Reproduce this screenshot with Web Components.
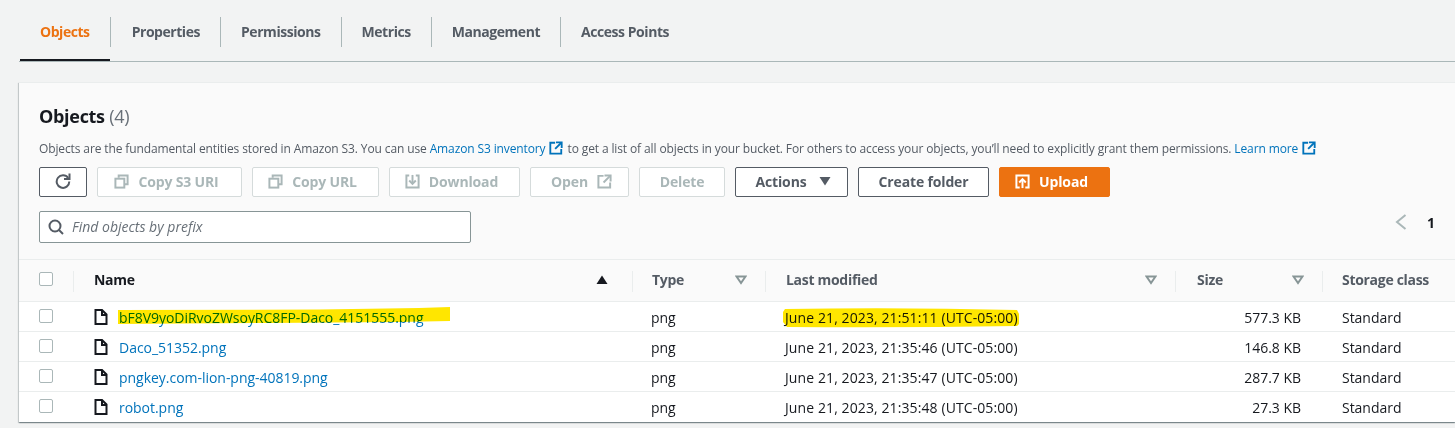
<!DOCTYPE html>
<html>
<head>
<meta charset="utf-8">
<title>Objects</title>
<style>
  html, body { margin: 0; padding: 0; background: #f2f3f3; overflow: hidden; }
  body {
    width: 1455px;
    height: 428px;
    font-family: "Open Sans", "Noto Sans", sans-serif;
    color: #16191f;
    --cols: 54px 559px 133px 410px 147px 1fr;
  }
</style>
</head>
<body>
<s3-tabs active="Objects" items="Properties|Permissions|Metrics|Management|Access Points"></s3-tabs>
<s3-card>
  <span slot="title">Objects</span>
  <span slot="count">(4)</span>
  <span slot="desc">Objects are the fundamental entities stored in Amazon S3. You can use <s3-link>Amazon S3 inventory</s3-link> to get a list of all objects in your bucket. For others to access your objects, you’ll need to explicitly grant them permissions. <s3-link>Learn more</s3-link></span>
  <s3-button slot="tools" icon="refresh" kind="normal" style="width:48px"></s3-button>
  <s3-button slot="tools" icon="copy" kind="off" style="width:145px">Copy S3 URI</s3-button>
  <s3-button slot="tools" icon="copy" kind="off" style="width:127px">Copy URL</s3-button>
  <s3-button slot="tools" icon="download" kind="off" style="width:131px">Download</s3-button>
  <s3-button slot="tools" after="external" kind="off" style="width:99px">Open</s3-button>
  <s3-button slot="tools" kind="off" style="width:86px">Delete</s3-button>
  <s3-button slot="tools" after="caret" kind="normal" style="width:113px;--gap:11px">Actions</s3-button>
  <s3-button slot="tools" kind="normal" style="width:131px">Create folder</s3-button>
  <s3-button slot="tools" icon="upload" kind="primary" style="width:111px">Upload</s3-button>
  <s3-search slot="search" placeholder="Find objects by prefix"></s3-search>
  <s3-pager slot="pager" page="1"></s3-pager>
  <s3-table slot="table">
    <s3-head></s3-head>
    <s3-row name="bF8V9yoDiRvoZWsoyRC8FP-Daco_4151555.png" modified="June 21, 2023, 21:51:11 (UTC-05:00)" size="577.3 KB" marked></s3-row>
    <s3-row name="Daco_51352.png" modified="June 21, 2023, 21:35:46 (UTC-05:00)" size="146.8 KB"></s3-row>
    <s3-row name="pngkey.com-lion-png-40819.png" modified="June 21, 2023, 21:35:47 (UTC-05:00)" size="287.7 KB"></s3-row>
    <s3-row name="robot.png" modified="June 21, 2023, 21:35:48 (UTC-05:00)" size="27.3 KB"></s3-row>
  </s3-table>
</s3-card>

<script>
const ICONS = {
  refresh: `<svg width="16" height="16" viewBox="0 0 16 16" fill="none" stroke="currentColor" stroke-width="2"><path d="M13.2 5A6.3 6.3 0 1 0 14.3 8.5"/><path d="M14.5 0.5V6H9"/></svg>`,
  copy: `<svg width="15" height="15" viewBox="0 0 16 16" fill="none" stroke="currentColor" stroke-width="2.1"><path d="M5 4V1.5H14.5V11H11.5"/><rect x="1.5" y="5" width="9.5" height="9.5"/></svg>`,
  download: `<svg width="15" height="15" viewBox="0 0 16 16" fill="none" stroke="currentColor" stroke-width="2.1"><path d="M4.5 1.5H1.5V14.5H14.5V1.5H11.5"/><path d="M8 1V10"/><path d="M4.5 7L8 10.5L11.5 7"/></svg>`,
  external: `<svg width="15" height="15" viewBox="0 0 16 16" fill="none" stroke="currentColor" stroke-width="2.1"><path d="M7 2H1.5V14.5H14V9"/><path d="M8 1.5H14.5V8"/><path d="M14 2L7 9"/></svg>`,
  upload: `<svg width="15" height="15" viewBox="0 0 16 16" fill="none" stroke="currentColor" stroke-width="2.1"><path d="M5 14.5H1.5V1.5H14.5V14.5H11"/><path d="M8 15V6"/><path d="M4.5 9L8 5.5L11.5 9"/></svg>`,
  caret: `<svg width="14" height="14" viewBox="0 0 14 14" fill="currentColor"><path d="M1.5 3H12.5L7 11.5Z"/></svg>`,
  file: `<svg width="14" height="16" viewBox="0 0 14 16" fill="none" stroke="currentColor" stroke-width="2"><path d="M1.5 1H8L12.5 5.5V15H1.5Z"/><path d="M8 1V6H13"/></svg>`,
};

class S3Tabs extends HTMLElement {
  connectedCallback() {
    const rest = this.getAttribute("items").split("|");
    const root = this.attachShadow({ mode: "open" });
    root.innerHTML = `
      <style>
        :host { display: block; height: 61px; margin-left: 19px; border-bottom: 1px solid #aab7b8; }
        .tabs { display: flex; padding-top: 17px; padding-left: 1px; height: 47px; box-sizing: border-box; }
        .tab {
          height: 30px; line-height: 30px; padding: 0 20px;
          font-size: 14px; font-weight: 700; color: #545b64; letter-spacing: -0.45px;
          border-left: 1px solid #aab7b8;
        }
        .tab.first { border-left: none; color: #ec7211; }
        .tab:nth-child(2) { padding: 0 20px 0 21px; }
        .bar { width: 90px; height: 2px; background: #16191f; margin: 12px 0 0 1px; }
      </style>
      <div class="tabs">
        <div class="tab first">${this.getAttribute("active")}</div>
        ${rest.map(t => `<div class="tab">${t}</div>`).join("")}
      </div>
      <div class="bar"></div>`;
  }
}
customElements.define("s3-tabs", S3Tabs);

class S3Link extends HTMLElement {
  connectedCallback() {
    const root = this.attachShadow({ mode: "open" });
    root.innerHTML = `
      <style>
        :host { display: inline; color: #0073bb; }
        svg { width: 14px; height: 14px; vertical-align: -2px; margin: 0 1px 0 1px; }
      </style><slot></slot> ${ICONS.external}`;
  }
}
customElements.define("s3-link", S3Link);

class S3Button extends HTMLElement {
  connectedCallback() {
    const icon = this.getAttribute("icon");
    const after = this.getAttribute("after");
    const root = this.attachShadow({ mode: "open" });
    root.innerHTML = `
      <style>
        :host {
          display: flex; align-items: center; justify-content: center; gap: var(--gap, 9px);
          box-sizing: border-box; height: 30px; border-radius: 2px; padding-bottom: 2px;
          font-size: 14px; font-weight: 700; letter-spacing: -0.15px;
        }
        :host([icon]:not([icon="refresh"])) { padding-right: 6px; }
        :host([after]) { padding-left: 4px; }
        :host([kind="normal"]) { border: 1px solid #545b64; color: #545b64; background: #fff; }
        :host([kind="off"]) { border: 1px solid #d5dbdb; color: #aab7b8; background: #fff; }
        :host([kind="primary"]) { background: #ec7211; color: #fff; border: 1px solid #ec7211; }
        svg { display: block; flex: none; }
      </style>
      ${icon ? ICONS[icon] : ""}<slot></slot>${after ? ICONS[after] : ""}`;
  }
}
customElements.define("s3-button", S3Button);

class S3Search extends HTMLElement {
  connectedCallback() {
    const root = this.attachShadow({ mode: "open" });
    root.innerHTML = `
      <style>
        :host {
          display: flex; align-items: center; gap: 8px; box-sizing: border-box;
          width: 432px; height: 32px; padding-left: 8px;
          border: 1px solid #879596; border-radius: 2px; background: #fff;
          font-size: 14px; font-style: italic; color: #687078;
        }
        svg { display: block; flex: none; color: #545b64; }
        span { margin-bottom: 2px; }
      </style>
      <svg width="16" height="16" viewBox="0 0 16 16" fill="none" stroke="currentColor" stroke-width="2"><circle cx="7" cy="7" r="5.5"/><path d="M11 11L15 15"/></svg>
      <span>${this.getAttribute("placeholder")}</span>`;
  }
}
customElements.define("s3-search", S3Search);

class S3Pager extends HTMLElement {
  connectedCallback() {
    const root = this.attachShadow({ mode: "open" });
    root.innerHTML = `
      <style>
        :host { display: flex; align-items: center; gap: 20px; height: 22px; font-size: 14px; font-weight: 700; color: #16191f; }
        svg { display: block; }
      </style>
      <svg width="12" height="16" viewBox="0 0 12 16" fill="none" stroke="#aab7b8" stroke-width="2"><path d="M10.5 1L2 8L10.5 15"/></svg>
      <span>${this.getAttribute("page")}</span>`;
  }
}
customElements.define("s3-pager", S3Pager);

class S3Table extends HTMLElement {
  connectedCallback() {
    const root = this.attachShadow({ mode: "open" });
    root.innerHTML = `
      <style>:host { display: block; border-top: 1px solid #eaeded; }</style>
      <slot></slot>`;
  }
}
customElements.define("s3-table", S3Table);

const checkbox = `<span class="check"></span>`;
const filter = `<svg class="filter" width="12" height="10" viewBox="0 0 12 10" fill="none" stroke="#879596" stroke-width="2"><path d="M1.5 1.5H10.5L6 8Z"/></svg>`;

const GRID_CSS = `
  :host { display: grid; grid-template-columns: var(--cols); box-sizing: border-box; background: #fff; align-items: center; }
  .check { display: block; width: 12px; height: 12px; margin-left: 20px; border: 1px solid #aab7b8; border-radius: 2px; background: #fff; }
`;

class S3Head extends HTMLElement {
  connectedCallback() {
    const col = (label, cls, icon) => `<div class="col ${cls}"><span>${label}</span>${icon || ""}</div>`;
    const root = this.attachShadow({ mode: "open" });
    root.innerHTML = `
      <style>${GRID_CSS}
        :host { height: 42px; background: #fafafa; border-bottom: 1px solid #eaeded; font-size: 14px; font-weight: 700; color: #545b64; letter-spacing: -0.3px; }
        .col { display: flex; align-items: center; justify-content: space-between; height: 21px; padding: 0 18px 0 20px; border-left: 1px solid #eaeded; margin-top: 1px; }
        .col span { margin-bottom: 4px; }
        .first { height: 21px; display: flex; align-items: center; margin-top: -3px; }
        .name { color: #16191f; padding-right: 24px; }
        .type { padding-left: 19px; }
        .size { padding-left: 21px; }
        .storage { padding-left: 19px; }
        svg { display: block; flex: none; margin-bottom: 2px; }
      </style>
      <div class="first">${checkbox}</div>
      ${col("Name", "name", `<svg width="12" height="10" viewBox="0 0 12 10" fill="#16191f"><path d="M6 0.5L11.5 9H0.5Z"/></svg>`)}
      ${col("Type", "type", filter)}
      ${col("Last modified", "", filter)}
      ${col("Size", "size", filter)}
      ${col("Storage class", "storage")}`;
  }
}
customElements.define("s3-head", S3Head);

class S3Row extends HTMLElement {
  connectedCallback() {
    const marked = this.hasAttribute("marked");
    const root = this.attachShadow({ mode: "open" });
    root.innerHTML = `
      <style>${GRID_CSS}
        :host { height: 30px; padding-top: 1px; border-bottom: 1px solid #eaeded; font-size: 14px; color: #16191f; position: relative; letter-spacing: -0.03px; }
        :host(:last-child) { border-bottom-color: transparent; }
        .check { margin-top: -3px; }
        .name { display: flex; align-items: center; gap: 11px; padding-left: 21px; }
        .name svg { display: block; flex: none; color: #16191f; margin-top: -1px; }
        .name a { color: #0073bb; }
        .type { padding-left: 19px; }
        .modified { padding-left: 20px; letter-spacing: 0.1px; }
        .size { text-align: right; padding-right: 21px; }
        .storage { padding-left: 20px; }
        .hl { position: absolute; top: 0; left: 0; pointer-events: none; mix-blend-mode: multiply; }
      </style>
      ${checkbox}
      <div class="name">${ICONS.file}<a>${this.getAttribute("name")}</a></div>
      <div class="type">png</div>
      <div class="modified">${this.getAttribute("modified")}</div>
      <div class="size">${this.getAttribute("size")}</div>
      <div class="storage">Standard</div>
      ${marked ? `<svg class="hl" width="1040" height="30" viewBox="0 0 1040 30" fill="#ffe600"><path d="M99 8L300 7.5L400 6L431 5L431 19L380 20L250 21L99 22Z"/><path d="M766 7Q880 5 998 8L1000 12L1000 22L998 24Q880 26 768 25L764 20L764 10Z"/></svg>` : ""}`;
  }
}
customElements.define("s3-row", S3Row);

class S3Card extends HTMLElement {
  connectedCallback() {
    const root = this.attachShadow({ mode: "open" });
    root.innerHTML = `
      <style>
        :host {
          display: block; margin: 20px 0 0 19px; background: #fafafa;
          box-shadow: 0 1px 1px 0 rgba(0,28,36,.3), 1px 1px 1px 0 rgba(0,28,36,.15), -1px 1px 1px 0 rgba(0,28,36,.15);
          border-top: 1px solid #eaeded;
        }
        .top { padding: 21px 20px 0 20px; }
        h2 { margin: 0; font-size: 18px; line-height: 24px; font-weight: 700; color: #16191f; letter-spacing: -0.3px; }
        h2 .count { font-weight: 400; color: #687078; }
        .desc { margin-top: 11px; height: 20px; font-size: 12px; line-height: 20px; color: #545b64; white-space: nowrap; letter-spacing: -0.12px; }
        .tools { display: flex; gap: 10px; margin-top: 8px; }
        .find { display: flex; justify-content: space-between; align-items: flex-start; margin: 14px 0 16px; }
      </style>
      <div class="top">
        <h2><slot name="title"></slot> <span class="count"><slot name="count"></slot></span></h2>
        <div class="desc"><slot name="desc"></slot></div>
        <div class="tools"><slot name="tools"></slot></div>
        <div class="find"><slot name="search"></slot><slot name="pager"></slot></div>
      </div>
      <slot name="table"></slot>`;
  }
}
customElements.define("s3-card", S3Card);
</script>
</body>
</html>
